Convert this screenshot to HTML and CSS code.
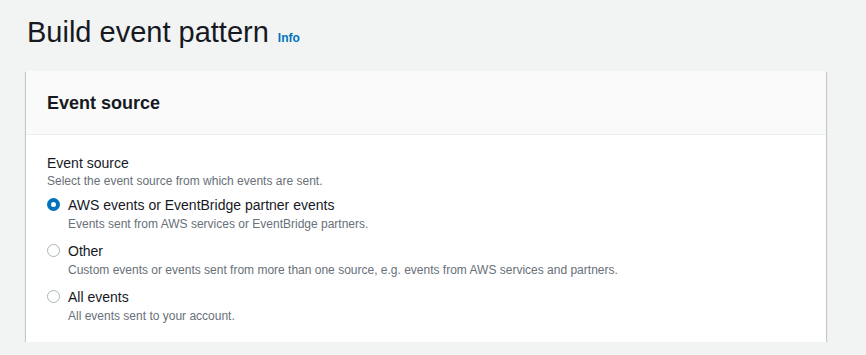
FILE: index.html
```html
<!DOCTYPE html>
<html>
<head>
    <title>Build event pattern</title>
    <meta charset="UTF-8">
    <link rel="stylesheet" href="styles.css">
</head>
<body>
    <div class="page-header">
        <h1>Build event pattern</h1>
        <a class="info-link" href="#">Info</a>
    </div>

    <div class="container">
        <div class="container-header">
            <h2>Event source</h2>
        </div>
        <div class="container-body">
            <div class="field-label">Event source</div>
            <div class="field-desc">Select the event source from which events are sent.</div>

            <div class="radio-group">
                <label class="radio-item">
                    <span class="radio checked"></span>
                    <span class="radio-text">
                        <span class="radio-label">AWS events or EventBridge partner events</span>
                        <span class="radio-desc">Events sent from AWS services or EventBridge partners.</span>
                    </span>
                </label>
                <label class="radio-item">
                    <span class="radio"></span>
                    <span class="radio-text">
                        <span class="radio-label">Other</span>
                        <span class="radio-desc">Custom events or events sent from more than one source, e.g. events from AWS services and partners.</span>
                    </span>
                </label>
                <label class="radio-item">
                    <span class="radio"></span>
                    <span class="radio-text">
                        <span class="radio-label">All events</span>
                        <span class="radio-desc">All events sent to your account.</span>
                    </span>
                </label>
            </div>
        </div>
    </div>
</body>
</html>
```

FILE: styles.css
```css
:root {
    --text-color: #16191f;
    --muted-color: #687078;
    --link-color: #0073bb;
    --border-color: #eaeded;
    --background-color: #f2f3f3;
}

body {
    margin: 0;
    padding: 0 40px 0 26px;
    font-family: "Liberation Sans", Arial, sans-serif;
    color: var(--text-color);
    background: var(--background-color);
}

.page-header {
    display: flex;
    align-items: baseline;
    gap: 9px;
    padding: 13px 0 0 1px;
    height: 59px;
    box-sizing: border-box;
}

.page-header h1 {
    margin: 0;
    font-size: 29px;
    font-weight: 400;
    line-height: 38px;
}

.info-link {
    color: var(--link-color);
    font-size: 12px;
    font-weight: 700;
    text-decoration: none;
}

.container {
    width: 800px;
    background: white;
    box-shadow: 0 1px 1px 0 rgba(0,28,36,0.3), 1px 1px 1px 0 rgba(0,28,36,0.15), -1px 1px 1px 0 rgba(0,28,36,0.15);
    margin-top: 12px;
}

.container-header {
    background: #fafafa;
    border-bottom: 1px solid var(--border-color);
    padding: 20px 21px;
    height: 64px;
    box-sizing: border-box;
}

.container-header h2 {
    margin: 0;
    font-size: 18px;
    font-weight: 700;
    line-height: 24px;
}

.container-body {
    padding: 18px 21px 17px;
}

.field-label {
    font-size: 14px;
    line-height: 20px;
}

.field-desc {
    font-size: 12px;
    line-height: 16px;
    color: var(--muted-color);
}

.radio-group {
    margin-top: 6px;
    display: flex;
    flex-direction: column;
    gap: 8px;
}

.radio-item {
    display: flex;
    gap: 8px;
    align-items: flex-start;
}

.radio {
    width: 13px;
    height: 13px;
    margin-top: 3px;
    border: 1px solid #aab7b8;
    border-radius: 50%;
    box-sizing: border-box;
    flex: none;
}

.radio.checked {
    border: 4px solid var(--link-color);
}

.radio-text {
    display: flex;
    flex-direction: column;
}

.radio-label {
    font-size: 14px;
    line-height: 20px;
}

.radio-desc {
    font-size: 12px;
    line-height: 18px;
    color: var(--muted-color);
}
```
